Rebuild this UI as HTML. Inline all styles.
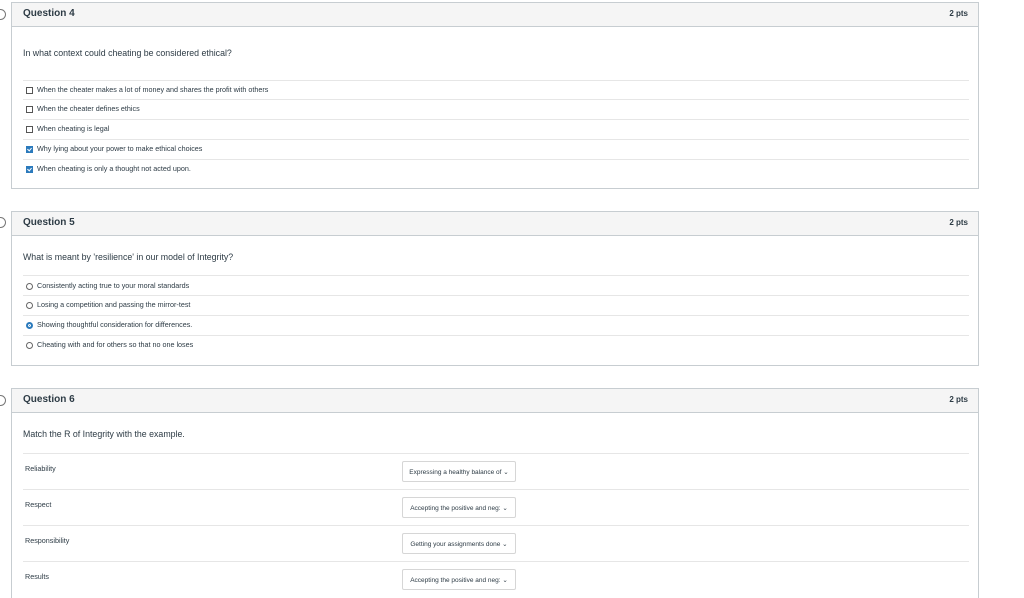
<!DOCTYPE html>
<html style="overflow:hidden"><head><meta charset="utf-8"><style>
html,body{overflow:hidden;height:598px}
body{margin:0;width:1024px;background:#fff;font-family:"Liberation Sans",sans-serif;color:#2d3b45;position:relative}
.card{position:absolute;left:11px;width:966px;border:1px solid #c7cdd1;background:#fff}
.hd{height:23px;background:#f5f5f5;border-bottom:1px solid #c7cdd1;position:relative}
.hd .t{position:absolute;left:11px;top:5px;font-size:10px;font-weight:bold}
.hd .p{position:absolute;right:10px;top:6px;font-size:8px;font-weight:bold}
.a{position:absolute;font-size:7.2px;white-space:nowrap}
.q{font-size:8.8px}
.ln{position:absolute;left:11px;width:946px;height:1px;background:#e6e6e6}
.cb{display:inline-block;width:7px;height:7px;border:1px solid #555;vertical-align:-2px;margin-right:4px;box-sizing:border-box}
.cb.on{background:#2b7abc;border-color:#2b7abc;position:relative}
.cb.on:after{content:"";position:absolute;left:1px;top:0;width:2px;height:3px;border:solid #fff;border-width:0 1px 1px 0;transform:rotate(40deg)}
.rd{display:inline-block;width:7px;height:7px;border:1px solid #666;border-radius:50%;vertical-align:-2px;margin-right:4px;box-sizing:border-box}
.rd.on{border:2px solid #2b7abc;background:#2b7abc;box-shadow:inset 0 0 0 1px #fff}
.sel{position:absolute;left:390px;width:114px;height:21px;border:1px solid #d6d6d6;border-radius:2px;font-size:6.5px;line-height:21px;text-align:center;box-sizing:border-box;white-space:nowrap;overflow:hidden}
.ic{position:absolute;left:-5px;width:9px;height:9px;border:1px solid #777;border-radius:50%;background:#fff}
</style></head><body>
<div class="ic" style="top:9px"></div>
<div class="ic" style="top:217px"></div>
<div class="ic" style="top:395px"></div>

<div class="card" style="top:2px;height:185px">
<div class="hd"><span class="t">Question 4</span><span class="p">2 pts</span></div>
<div class="a q" style="left:11px;top:45px">In what context could cheating be considered ethical?</div>
<div class="ln" style="top:77px"></div>
<div class="a" style="left:14px;top:82px"><span class="cb"></span>When the cheater makes a lot of money and shares the profit with others</div>
<div class="ln" style="top:96px"></div>
<div class="a" style="left:14px;top:101px"><span class="cb"></span>When the cheater defines ethics</div>
<div class="ln" style="top:116px"></div>
<div class="a" style="left:14px;top:121px"><span class="cb"></span>When cheating is legal</div>
<div class="ln" style="top:136px"></div>
<div class="a" style="left:14px;top:141px"><span class="cb on"></span>Why lying about your power to make ethical choices</div>
<div class="ln" style="top:156px"></div>
<div class="a" style="left:14px;top:161px"><span class="cb on"></span>When cheating is only a thought not acted upon.</div>
</div>

<div class="card" style="top:211px;height:153px">
<div class="hd"><span class="t">Question 5</span><span class="p">2 pts</span></div>
<div class="a q" style="left:11px;top:40px">What is meant by 'resilience' in our model of Integrity?</div>
<div class="ln" style="top:63px"></div>
<div class="a" style="left:14px;top:69px"><span class="rd"></span>Consistently acting true to your moral standards</div>
<div class="ln" style="top:83px"></div>
<div class="a" style="left:14px;top:88px"><span class="rd"></span>Losing a competition and passing the mirror-test</div>
<div class="ln" style="top:103px"></div>
<div class="a" style="left:14px;top:108px"><span class="rd on"></span>Showing thoughtful consideration for differences.</div>
<div class="ln" style="top:123px"></div>
<div class="a" style="left:14px;top:128px"><span class="rd"></span>Cheating with and for others so that no one loses</div>
</div>

<div class="card" style="top:388px;height:220px">
<div class="hd"><span class="t">Question 6</span><span class="p">2 pts</span></div>
<div class="a q" style="left:11px;top:40px">Match the R of Integrity with the example.</div>
<div class="ln" style="top:64px"></div>
<div class="a" style="left:13px;top:75px">Reliability</div>
<div class="sel" style="top:72px">Expressing a healthy balance of ⌄</div>
<div class="ln" style="top:100px"></div>
<div class="a" style="left:13px;top:111px">Respect</div>
<div class="sel" style="top:108px">Accepting the positive and neg: ⌄</div>
<div class="ln" style="top:136px"></div>
<div class="a" style="left:13px;top:147px">Responsibility</div>
<div class="sel" style="top:144px">Getting your assignments done ⌄</div>
<div class="ln" style="top:172px"></div>
<div class="a" style="left:13px;top:183px">Results</div>
<div class="sel" style="top:180px">Accepting the positive and neg: ⌄</div>
</div>
</body></html>
